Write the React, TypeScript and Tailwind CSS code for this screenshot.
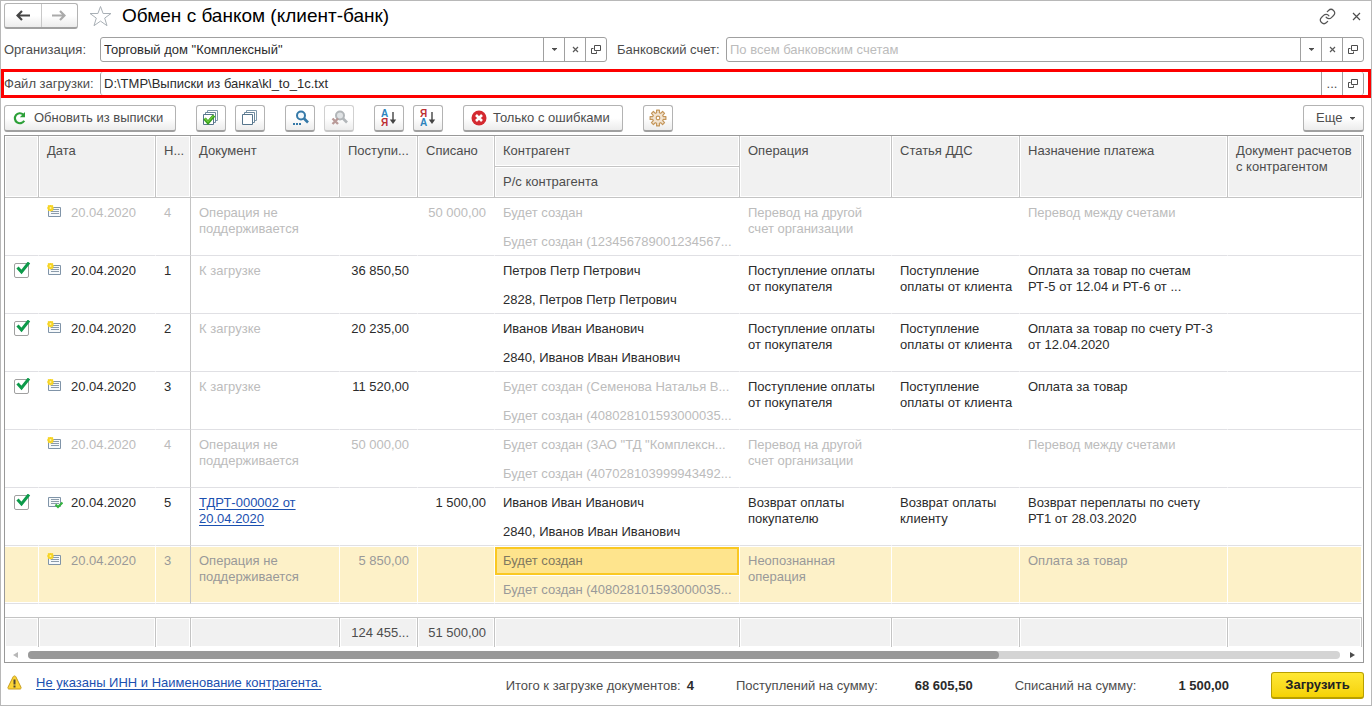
import type { ReactNode } from "react";
import { Link } from "lucide-react";

type Row = {
  checked?: boolean;
  muted?: boolean;
  selected?: boolean;
  posted?: boolean;
  num: string;
  doc: string[];
  docLink?: boolean;
  income?: string;
  expense?: string;
  party: [string, string];
  partyMuted?: boolean;
  operation: string[];
  article?: string[];
  purpose: string[];
};

const rows: Row[] = [
  {
    muted: true,
    num: "4",
    doc: ["Операция не", "поддерживается"],
    expense: "50 000,00",
    party: ["Будет создан", "Будет создан (123456789001234567..."],
    operation: ["Перевод на другой", "счет организации"],
    purpose: ["Перевод между счетами"],
  },
  {
    checked: true,
    num: "1",
    doc: ["К загрузке"],
    income: "36 850,50",
    party: ["Петров Петр Петрович", "2828, Петров Петр Петрович"],
    operation: ["Поступление оплаты", "от покупателя"],
    article: ["Поступление", "оплаты от клиента"],
    purpose: ["Оплата за товар по счетам", "РТ-5 от 12.04 и РТ-6 от ..."],
  },
  {
    checked: true,
    num: "2",
    doc: ["К загрузке"],
    income: "20 235,00",
    party: ["Иванов Иван Иванович", "2840, Иванов Иван Иванович"],
    operation: ["Поступление оплаты", "от покупателя"],
    article: ["Поступление", "оплаты от клиента"],
    purpose: ["Оплата за товар по счету РТ-3", "от 12.04.2020"],
  },
  {
    checked: true,
    num: "3",
    doc: ["К загрузке"],
    income: "11 520,00",
    party: ["Будет создан (Семенова Наталья В...", "Будет создан (408028101593000035..."],
    partyMuted: true,
    operation: ["Поступление оплаты", "от покупателя"],
    article: ["Поступление", "оплаты от клиента"],
    purpose: ["Оплата за товар"],
  },
  {
    muted: true,
    num: "4",
    doc: ["Операция не", "поддерживается"],
    income: "50 000,00",
    party: ["Будет создан (ЗАО \"ТД \"Комплексн...", "Будет создан (407028103999943492..."],
    operation: ["Перевод на другой", "счет организации"],
    purpose: ["Перевод между счетами"],
  },
  {
    checked: true,
    posted: true,
    num: "5",
    doc: ["ТДРТ-000002 от", "20.04.2020"],
    docLink: true,
    expense: "1 500,00",
    party: ["Иванов Иван Иванович", "2840, Иванов Иван Иванович"],
    operation: ["Возврат оплаты", "покупателю"],
    article: ["Возврат оплаты", "клиенту"],
    purpose: ["Возврат переплаты по счету", "РТ1 от 28.03.2020"],
  },
  {
    muted: true,
    selected: true,
    num: "3",
    doc: ["Операция не", "поддерживается"],
    income: "5 850,00",
    party: ["Будет создан", "Будет создан (408028101593000035..."],
    operation: ["Неопознанная", "операция"],
    purpose: ["Оплата за товар"],
  },
];

const BUTTON =
  "flex h-[27px] items-center rounded-[3px] border border-[#b3b3b3] border-b-2 border-b-[#a0a0a0] bg-gradient-to-b from-white from-50% to-[#ececec] text-[#4d4d4d]";

function ToolButton({ label, disabled, children }: { label: string; disabled?: boolean; children: ReactNode }) {
  return (
    <button type="button" aria-label={label} disabled={disabled} className={`${BUTTON} w-[30px] justify-center disabled:border-[#d0d0d0] disabled:border-b-[#c6c6c6]`}>
      {children}
    </button>
  );
}

function FieldButton({ label, children }: { label: string; children: ReactNode }) {
  return (
    <button type="button" aria-label={label} className="flex w-[21px] shrink-0 items-center justify-center self-stretch border-l border-[#a0a0a0] text-[#4d4d4d]">
      {children}
    </button>
  );
}

function CaretIcon() {
  return (
    <svg width="5" height="3" viewBox="0 0 5 3" fill="#4d4d4d">
      <path d="M0 0h5v.6L2.500 3 0 .6z" />
    </svg>
  );
}

function ClearIcon() {
  return (
    <svg width="7" height="7" viewBox="0 0 7 7" stroke="#5a5a5a" strokeWidth="1.200">
      <path d="M1 1l5 5M6 1L1 6" />
    </svg>
  );
}

function OpenIcon() {
  return (
    <svg width="10" height="9" viewBox="0 0 10 9" fill="none" stroke="#4d4d4d">
      <path d="M3.500.5h6v5h-6zM2.500 3.500h-2v5h5v-2" />
    </svg>
  );
}

function ArrowIcon({ back }: { back?: boolean }) {
  return (
    <svg width="14" height="11" viewBox="0 0 14 11" fill="none" stroke={back ? "#444" : "#aaa"} strokeWidth="2.200">
      <path d={back ? "M14 5.500H2M6 1L1.500 5.500 6 10" : "M0 5.500h12M8 1l4.500 4.500L8 10"} />
    </svg>
  );
}

function StarIcon() {
  return (
    <svg width="23" height="22" viewBox="0 0 23 22" fill="white" stroke="#a9b0b6">
      <path d="M11.500 1.500l2.600 7h7.900l-6.300 4.600 2.300 7.600-6.500-4.600-6.500 4.600 2.300-7.600L1 8.500h7.900z" />
    </svg>
  );
}

function RefreshIcon() {
  return (
    <svg width="13" height="14" viewBox="0 0 13 14" fill="none" stroke="#2ca038" strokeWidth="2.200">
      <path d="M11.200 9.800a5 5 0 1 1-1-6.300" />
      <path d="M12 1v5.200H6.800z" fill="#2ca038" stroke="none" />
    </svg>
  );
}

function StackIcon({ checked }: { checked?: boolean }) {
  return (
    <svg width="16" height="16" viewBox="0 0 16 16" fill="white" stroke="#56758c">
      <path d="M4.500.5h10v10h-10z" stroke="#8099aa" />
      <path d="M2.500 2.500h10v10h-10z" stroke="#6c899d" />
      <path d="M.5 4.500h10v10H.5z" />
      {checked && <path d="M1.500 8.500l3.500 4L11 5.500" fill="none" stroke="#37a01e" strokeWidth="3.400" />}
      {checked && <path d="M2 8.500l3 3.300L10.500 5.500" fill="none" stroke="#6fca3c" strokeWidth="1.200" />}
    </svg>
  );
}

function SearchIcon({ cancel }: { cancel?: boolean }) {
  const color = cancel ? "#b2b6b9" : "#3579a8";
  return (
    <svg width="17" height="16" viewBox="0 0 17 16" fill="none" stroke={color}>
      <circle cx="9" cy="5.500" r="4" strokeWidth="2" fill={cancel ? "#dfe2e4" : "#f2f8fc"} />
      <path d="M12 8.500l4 4" strokeWidth="2.600" />
      {cancel ? (
        <path d="M1.500 8.500l5.500 5.500M7 8.500L1.500 14" stroke="#b99a98" strokeWidth="2.400" />
      ) : (
        <path d="M1 14h2M4 14h2M7 14h2" strokeWidth="2" />
      )}
    </svg>
  );
}

function SortIcon({ desc }: { desc?: boolean }) {
  return (
    <svg width="16" height="18" viewBox="0 0 16 18" className="text-[10px] font-bold">
      <text x="0" y="8" fill={desc ? "#bd2f33" : "#2d84bd"}>{desc ? "Я" : "А"}</text>
      <text x="0" y="17" fill={desc ? "#2d84bd" : "#bd2f33"}>{desc ? "А" : "Я"}</text>
      <path d="M12 3v10" stroke="#444" strokeWidth="1.400" />
      <path d="M8.800 10.500h6.400L12 15z" fill="#444" />
    </svg>
  );
}

function ErrorIcon() {
  return (
    <svg width="16" height="16" viewBox="0 0 16 16">
      <circle cx="8" cy="8" r="7.500" fill="#d42a30" />
      <path d="M5 5l6 6M11 5l-6 6" stroke="white" strokeWidth="2.600" />
    </svg>
  );
}

// Four points per tooth: root, tip, tip, root.
const GEAR_POINTS = Array.from({ length: 8 }, (_, tooth) =>
  [[-15, 5.4], [-10, 8], [10, 8], [15, 5.4]].map(([offset, radius]) => {
    const angle = ((tooth * 45 + offset) * Math.PI) / 180;
    return `${(9 + radius * Math.cos(angle)).toFixed(2)},${(9 + radius * Math.sin(angle)).toFixed(2)}`;
  }),
)
  .flat()
  .join(" ");

function GearIcon() {
  return (
    <svg width="18" height="18" viewBox="0 0 18 18" stroke="#c4965a" strokeLinejoin="round">
      <polygon points={GEAR_POINTS} fill="#f1e3d1" strokeWidth="1.200" />
      <circle cx="9" cy="9" r="1.800" fill="white" strokeWidth="1.200" />
    </svg>
  );
}

function DocIcon({ posted }: { posted?: boolean }) {
  return (
    <svg width="16" height="14" viewBox="0 0 16 14" fill="none" className="shrink-0">
      <path d="M1.500 2.500h12v9h-12z" fill="#f6f9fb" stroke="#8094a8" />
      <path d="M4 4.500h8M4 6.500h8M4 8.500h8" stroke="#8c9cab" />
      {posted ? (
        <path d="M8.500 9.500l2.500 2.500L15.500 7.500" stroke="#35b340" strokeWidth="2.200" />
      ) : (
        <g>
          <circle cx="3.500" cy="3" r="2.900" fill="#fbd91c" />
          <path d="M3.500 0v6.500M0 3h7M1 .5l5 5M6 .5l-5 5" stroke="#f5d327" strokeWidth="1.200" />
          <circle cx="3.500" cy="3" r="1" fill="#fff2a0" />
        </g>
      )}
    </svg>
  );
}

function WarningIcon() {
  return (
    <svg width="15" height="15" viewBox="0 0 15 15">
      <path d="M7.500.9c.6 0 1 .3 1.300.8l5.200 10.600c.4.900-.1 1.700-1 1.700H2c-.9 0-1.400-.8-1-1.700L6.200 1.700c.3-.5.700-.8 1.300-.8z" fill="#fcd535" stroke="#c79d1f" />
      <path d="M6.500 4.500h2v5h-2zM6.500 10.500h2v2h-2z" fill="#4c4636" />
    </svg>
  );
}

function RowCheck({ num }: { num: string }) {
  return (
    <label className="relative ml-[9px] mt-[7px] block size-[15px]">
      <input type="checkbox" defaultChecked aria-label={`Загружать строку ${num}`} className="peer block size-[15px] appearance-none rounded-[2px] border border-[#a0a0a0] bg-white" />
      <svg width="16" height="14" viewBox="0 0 16 14" className="pointer-events-none absolute -top-px left-0.5 hidden peer-checked:block">
        <path d="M1.500 5.500L5.500 10l7.500-9.500" fill="none" stroke="#0d9a4a" strokeWidth="3" />
      </svg>
    </label>
  );
}

function Lines({ text }: { text: string[] }) {
  return (
    <>
      {text.map((line) => (
        <span key={line} className="block whitespace-nowrap">{line}</span>
      ))}
    </>
  );
}

const HEAD = "border-r border-b border-r-[#c4c4c4] border-b-[#c4c4c4] bg-[#f1f1f1] px-2 pt-[7px] text-left align-top font-normal shadow-[inset_0_0_0_1px_white]";

function TableRow({ row }: { row: Row }) {
  const edge = row.selected ? "border-r border-r-white" : "border-r border-r-transparent";
  const fill = row.selected ? "bg-[#fdf1c8] shadow-[inset_0_1px_0_white,inset_0_-1px_0_white]" : "";
  const dim = row.selected ? "text-[#999]" : "text-[#bcbcbc]";
  const main = row.muted ? dim : "text-[#2b2b2b]";
  const cell = `border-b border-b-[#e0e0e4] px-2 pt-[7px] align-top bg-clip-padding ${edge} ${fill} ${main}`;
  return (
    <tr className="h-[58px]">
      <td className={`border-b border-b-[#e0e0e4] align-top bg-clip-padding ${edge} ${fill}`}>{row.checked && <RowCheck num={row.num} />}</td>
      <td className={cell}>
        <span className="flex items-start gap-2">
          <DocIcon posted={row.posted} />
          20.04.2020
        </span>
      </td>
      <td className={`border-r border-r-[#c4c4c4] border-b border-b-[#e0e0e4] px-2 pt-[7px] align-top ${fill} ${main}`}>{row.num}</td>
      <td className={cell}>
        {row.docLink ? (
          <a href="#document" className="text-[#1b50b0] underline underline-offset-2">
            <Lines text={row.doc} />
          </a>
        ) : (
          <span className={dim}>
            <Lines text={row.doc} />
          </span>
        )}
      </td>
      <td className={`${cell} text-right`}>{row.income}</td>
      <td className={`${cell} text-right`}>{row.expense}</td>
      <td className={`h-[58px] border-b border-b-[#e0e0e4] p-0 align-top whitespace-nowrap bg-clip-padding ${edge} ${fill} ${row.partyMuted ? dim : main}`}>
        {row.selected ? (
          <div className="mt-px h-7 border-2 border-[#fac822] bg-[#fee48d] px-1.5 pt-1 text-[#807860]">{row.party[0]}</div>
        ) : (
          <div className="h-[29px] px-2 pt-[7px]">{row.party[0]}</div>
        )}
        <div className={`h-7 px-2 pt-[7px] ${row.selected ? "shadow-[inset_0_1px_0_white]" : ""}`}>{row.party[1]}</div>
      </td>
      <td className={cell}><Lines text={row.operation} /></td>
      <td className={cell}>{row.article && <Lines text={row.article} />}</td>
      <td className={cell}><Lines text={row.purpose} /></td>
      <td className={cell} />
    </tr>
  );
}

function PaymentsTable() {
  const foot = "h-[30px] border-t border-r border-[#c4c4c4] bg-[#f1f1f1] px-2 text-right shadow-[inset_0_0_0_1px_white]";
  return (
    <div className="mr-[7px] ml-[3px] mt-[3px] border border-[#999]">
      <table className="w-full table-fixed border-separate border-spacing-0 pr-px leading-4">
        <colgroup>
          <col className="w-[34px]" />
          <col className="w-[117px]" />
          <col className="w-[35px]" />
          <col className="w-[149px]" />
          <col className="w-[78px]" />
          <col className="w-[77px]" />
          <col className="w-[245px]" />
          <col className="w-[152px]" />
          <col className="w-[128px]" />
          <col />
          <col className="w-[134px]" />
        </colgroup>
        <thead className="text-[#4d4d4d]">
          <tr className="h-[31px]">
            <th rowSpan={2} className={HEAD} />
            <th rowSpan={2} className={HEAD}>Дата</th>
            <th rowSpan={2} className={`${HEAD} whitespace-nowrap`}>Н...</th>
            <th rowSpan={2} className={HEAD}>Документ</th>
            <th rowSpan={2} className={`${HEAD} whitespace-nowrap`}>Поступи...</th>
            <th rowSpan={2} className={HEAD}>Списано</th>
            <th className={HEAD}>Контрагент</th>
            <th rowSpan={2} className={HEAD}>Операция</th>
            <th rowSpan={2} className={HEAD}>Статья ДДС</th>
            <th rowSpan={2} className={HEAD}>Назначение платежа</th>
            <th rowSpan={2} className={HEAD}>
              <Lines text={["Документ расчетов", "с контрагентом"]} />
            </th>
          </tr>
          <tr className="h-[31px]">
            <th className={HEAD}>Р/с контрагента</th>
          </tr>
        </thead>
        <tbody>
          {rows.map((row, i) => (
            <TableRow key={i} row={row} />
          ))}
          <tr className="h-[13px]">
            <td colSpan={11} />
          </tr>
        </tbody>
        <tfoot className="text-[#4d4d4d]">
          <tr>
            <td className={foot} />
            <td className={foot} />
            <td className={foot} />
            <td className={foot} />
            <td className={`${foot} whitespace-nowrap`}>124 455...</td>
            <td className={`${foot} whitespace-nowrap`}>51 500,00</td>
            <td className={foot} />
            <td className={foot} />
            <td className={foot} />
            <td className={foot} />
            <td className={foot} />
          </tr>
        </tfoot>
      </table>
      <div className="flex h-[15px] items-center gap-[10px] pr-2 pl-2">
        <svg width="5" height="6" viewBox="0 0 5 6" fill="#b8b8b8"><path d="M5 0v6L0 3z" /></svg>
        <div className="h-2 flex-1 rounded-full bg-[#d4d4d4]">
          <div className="h-2 w-[74%] rounded-full bg-[#999]" />
        </div>
        <svg width="5" height="6" viewBox="0 0 5 6" fill="#4d4d4d"><path d="M0 0v6l5-3z" /></svg>
      </div>
    </div>
  );
}

export default function App() {
  return (
    <div className="flex min-h-screen flex-col border border-[#b8b8b8] bg-white font-['Liberation_Sans',Arial,sans-serif] text-[13px] leading-4 text-[#4d4d4d]">
      <header className="flex items-center pt-0.5 pr-[10px] pl-[3px]">
        <div className="flex h-[26px] w-[74px] rounded-[3px] border border-b-2 border-[#b3b3b3] border-b-[#a0a0a0] bg-gradient-to-b from-white from-50% to-[#ececec]">
          <button type="button" aria-label="Назад" className="flex flex-1 items-center justify-center border-r border-[#c8c8c8]">
            <ArrowIcon back />
          </button>
          <button type="button" aria-label="Вперед" className="flex flex-1 items-center justify-center">
            <ArrowIcon />
          </button>
        </div>
        <button type="button" aria-label="В избранное" className="ml-[11px]">
          <StarIcon />
        </button>
        <h1 className="ml-[10px] flex-1 text-[19px] leading-6 text-black">Обмен с банком (клиент-банк)</h1>
        <button type="button" aria-label="Ссылка">
          <Link className="size-[17px] text-[#555]" strokeWidth={1.7} />
        </button>
        <button type="button" aria-label="Закрыть" className="ml-4">
          <svg width="9" height="9" viewBox="0 0 9 9" stroke="#4d4d4d" strokeWidth="1.200"><path d="M1 1l7 7M8 1L1 8" /></svg>
        </button>
      </header>

      <div className="mt-2 flex items-center pr-[7px] pl-[3px]">
        <label htmlFor="org" className="w-24 shrink-0">Организация:</label>
        <div className="flex h-[25px] w-[507px] items-center rounded-[3px] border border-[#a0a0a0]">
          <input id="org" defaultValue={'Торговый дом "Комплексный"'} className="min-w-0 flex-1 px-[3px] text-[#2b2b2b] outline-none" />
          <FieldButton label="Выбрать организацию"><CaretIcon /></FieldButton>
          <FieldButton label="Очистить организацию"><ClearIcon /></FieldButton>
          <FieldButton label="Открыть организацию"><OpenIcon /></FieldButton>
        </div>
        <label htmlFor="account" className="ml-[10px] w-[109px] shrink-0 whitespace-nowrap">Банковский счет:</label>
        <div className="flex h-[25px] min-w-0 flex-1 items-center rounded-[3px] border border-[#a0a0a0]">
          <input id="account" placeholder="По всем банковским счетам" className="min-w-0 flex-1 px-[3px] outline-none placeholder:text-[#bcbcbc]" />
          <FieldButton label="Выбрать счет"><CaretIcon /></FieldButton>
          <FieldButton label="Очистить счет"><ClearIcon /></FieldButton>
          <FieldButton label="Открыть счет"><OpenIcon /></FieldButton>
        </div>
      </div>

      <div className="mt-[7px] flex items-center border-3 border-[#fd0000] pr-1">
        <label htmlFor="file" className="w-24 shrink-0">Файл загрузки:</label>
        <div className="flex h-[23px] min-w-0 flex-1 items-center rounded-[3px] border-x border-[#a0a0a0]">
          <input id="file" defaultValue="D:\TMP\Выписки из банка\kl_to_1c.txt" className="min-w-0 flex-1 px-[3px] text-[#2b2b2b] outline-none" />
          <FieldButton label="Выбрать файл">...</FieldButton>
          <FieldButton label="Открыть файл"><OpenIcon /></FieldButton>
        </div>
      </div>

      <div className="mt-[7px] flex gap-5 pr-[7px] pl-[3px]">
        <button type="button" className={`${BUTTON} w-[172px] gap-2 pl-2`}>
          <RefreshIcon />
          Обновить из выписки
        </button>
        <div className="flex gap-[9px]">
          <ToolButton label="Установить флажки"><StackIcon checked /></ToolButton>
          <ToolButton label="Снять флажки"><StackIcon /></ToolButton>
        </div>
        <div className="flex gap-[9px]">
          <ToolButton label="Найти"><SearchIcon /></ToolButton>
          <ToolButton label="Отменить поиск" disabled><SearchIcon cancel /></ToolButton>
        </div>
        <div className="flex gap-[9px]">
          <ToolButton label="Сортировать по возрастанию"><SortIcon /></ToolButton>
          <ToolButton label="Сортировать по убыванию"><SortIcon desc /></ToolButton>
        </div>
        <button type="button" className={`${BUTTON} w-[160px] gap-1.5 pl-[7px]`}>
          <ErrorIcon />
          Только с ошибками
        </button>
        <ToolButton label="Настройки"><GearIcon /></ToolButton>
        <button type="button" className={`${BUTTON} ml-auto w-[61px] gap-2 pl-3`}>
          Еще
          <CaretIcon />
        </button>
      </div>

      <PaymentsTable />

      <footer className="flex items-center gap-[42px] pt-[9px] pr-[7px] pl-[6px]">
        <div className="flex flex-1 items-center gap-[14px] pb-1.5">
          <WarningIcon />
          <a href="#errors" className="text-[#1b50b0] underline underline-offset-2">Не указаны ИНН и Наименование контрагента.</a>
        </div>
        <p className="flex gap-1.5">
          Итого к загрузке документов: <b className="text-[#2b2b2b]">4</b>
        </p>
        <p className="flex gap-[37px]">
          Поступлений на сумму: <b className="text-[#2b2b2b]">68 605,50</b>
        </p>
        <p className="flex gap-[42px]">
          Списаний на сумму: <b className="text-[#2b2b2b]">1 500,00</b>
        </p>
        <button type="button" className="h-[27px] w-[93px] rounded-[3px] border border-b-2 border-[#b89f00] bg-gradient-to-b from-[#ffe833] to-[#f5d200] font-bold text-[#222]">
          Загрузить
        </button>
      </footer>
    </div>
  );
}
